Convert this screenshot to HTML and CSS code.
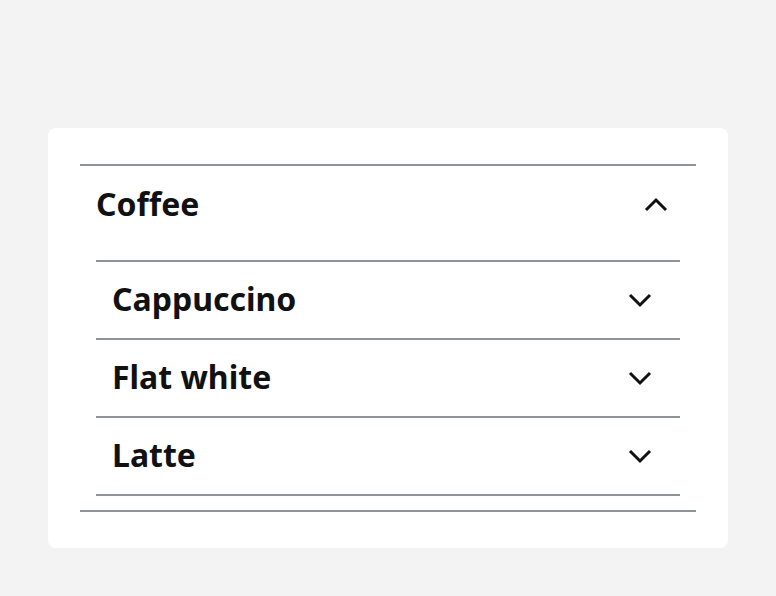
FILE: index.html
```html
<!DOCTYPE html>
<html>
<head>
<meta charset="utf-8">
<link rel="stylesheet" href="styles.css">
</head>
<body>
<div class="card">
  <div class="accordion">
    <div class="acc-header">
      <span class="title">Coffee</span>
      <svg class="chev" width="24" height="16" viewBox="0 0 24 16"><path d="M2 13 L12 3 L22 13" fill="none" stroke="#111" stroke-width="3"/></svg>
    </div>
    <div class="acc-body">
      <div class="row"><span class="label">Cappuccino</span><svg class="chev" width="24" height="16" viewBox="0 0 24 16"><path d="M2 3 L12 13 L22 3" fill="none" stroke="#111" stroke-width="3"/></svg></div>
      <div class="row"><span class="label">Flat white</span><svg class="chev" width="24" height="16" viewBox="0 0 24 16"><path d="M2 3 L12 13 L22 3" fill="none" stroke="#111" stroke-width="3"/></svg></div>
      <div class="row"><span class="label">Latte</span><svg class="chev" width="24" height="16" viewBox="0 0 24 16"><path d="M2 3 L12 13 L22 3" fill="none" stroke="#111" stroke-width="3"/></svg></div>
    </div>
  </div>
</div>
</body>
</html>
```

FILE: styles.css
```css
html, body { margin: 0; padding: 0; }
body {
  background: #f3f3f3;
  font-family: "Noto Sans", "Open Sans", sans-serif;
  width: 776px;
  height: 596px;
  padding-top: 128px;
  padding-left: 48px;
  box-sizing: border-box;
}
.card {
  width: 680px;
  height: 420px;
  background: #fff;
  border-radius: 8px;
  padding: 36px 32px 0;
  box-sizing: border-box;
}
.accordion {
  border-top: 2px solid #8e929a;
  border-bottom: 2px solid #8e929a;
}
.acc-header {
  height: 78px;
  display: flex;
  align-items: center;
  justify-content: space-between;
  padding: 0 28px 0 16px;
}
.title, .label {
  font-weight: 700;
  font-size: 32px;
  color: #111;
  padding-bottom: 4px;
}
.acc-body {
  margin: 16px 16px 14px;
}
.row {
  height: 76px;
  border-top: 2px solid #8e929a;
  display: flex;
  align-items: center;
  justify-content: space-between;
  padding: 0 28px 0 16px;
}
.row:last-child { border-bottom: 2px solid #8e929a; }
.chev { display: block; }
```
